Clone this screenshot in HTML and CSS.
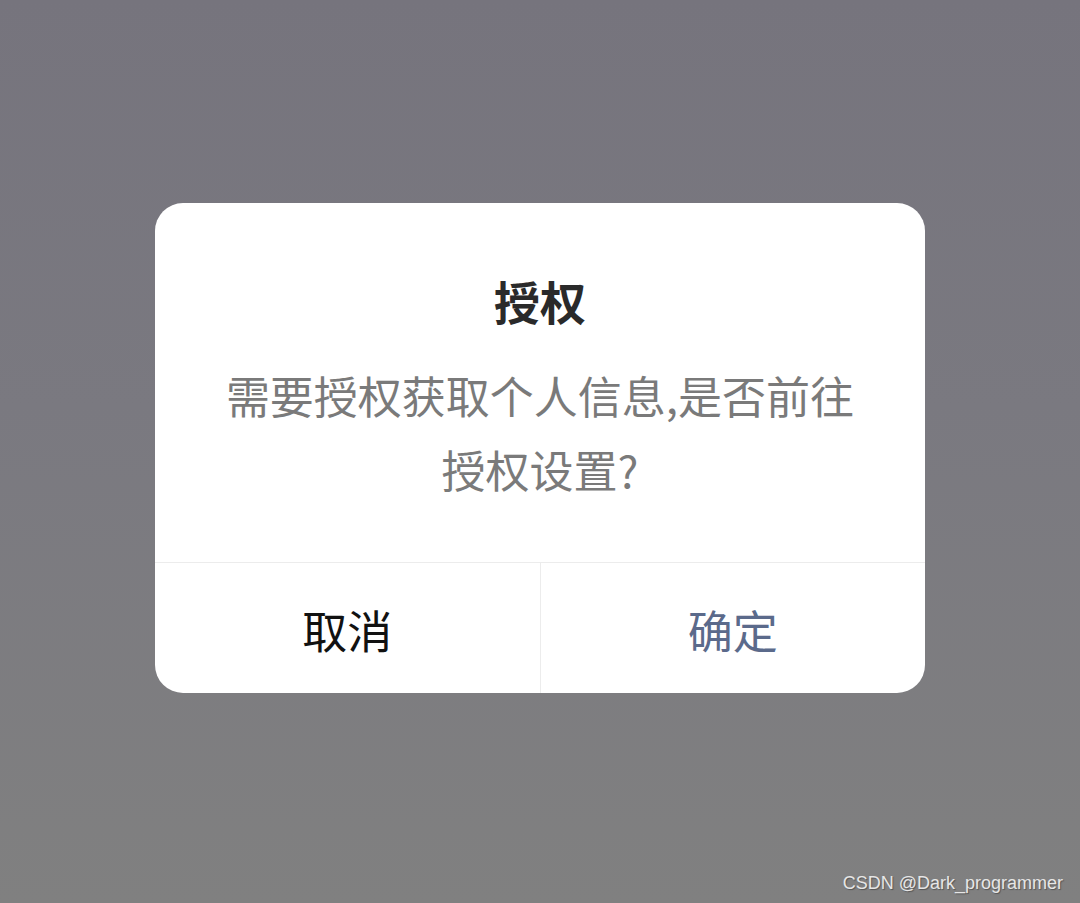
FILE: index.html
```html
<!DOCTYPE html>
<html lang="zh">
<head>
<meta charset="utf-8">
<link rel="stylesheet" href="styles.css">
</head>
<body>
<div class="screen">
  <div class="dialog">
    <div class="dialog-title">授权</div>
    <div class="dialog-content">需要授权获取个人信息,是否前往<br>授权设置?</div>
    <div class="dialog-actions">
      <div class="btn btn-cancel">取消</div>
      <div class="btn btn-confirm">确定</div>
    </div>
  </div>
  <div class="watermark">CSDN @Dark_programmer</div>
</div>
</body>
</html>
```
FILE: styles.css
```css
html, body {
  margin: 0;
  padding: 0;
}
body {
  width: 1080px;
  height: 903px;
  overflow: hidden;
  font-family: "Noto Sans CJK SC", "Noto Sans", sans-serif;
}
.screen {
  position: relative;
  width: 1080px;
  height: 903px;
  box-sizing: border-box;
  padding-top: 203px;
  background: linear-gradient(180deg, #76747d 0%, #7a7980 45%, #808080 100%);
}
.dialog {
  width: 770px;
  margin: 0 auto;
  background: #ffffff;
  border-radius: 28px;
  overflow: hidden;
}
.dialog-title {
  padding-top: 74px;
  font-size: 46px;
  line-height: 46px;
  font-weight: 700;
  color: #2a2a2a;
  text-align: center;
}
.dialog-content {
  margin-top: 35px;
  padding-bottom: 56px;
  font-size: 44px;
  line-height: 74px;
  color: #7a7a7a;
  text-align: center;
}
.dialog-actions {
  display: flex;
  border-top: 1px solid #ececec;
  height: 130px;
}
.btn {
  flex: 1;
  display: flex;
  align-items: center;
  justify-content: center;
  font-size: 45px;
  padding-top: 2px;
  box-sizing: border-box;
}
.btn-cancel {
  color: #111111;
  border-right: 1px solid #ececec;
}
.btn-confirm {
  color: #5b6a8b;
}
.watermark {
  position: absolute;
  right: 17px;
  bottom: 9px;
  font-family: "Liberation Sans", Arial, sans-serif;
  font-size: 18px;
  color: #e6e6e6;
  text-shadow: 1px 1px 1px #555555;
}
```
